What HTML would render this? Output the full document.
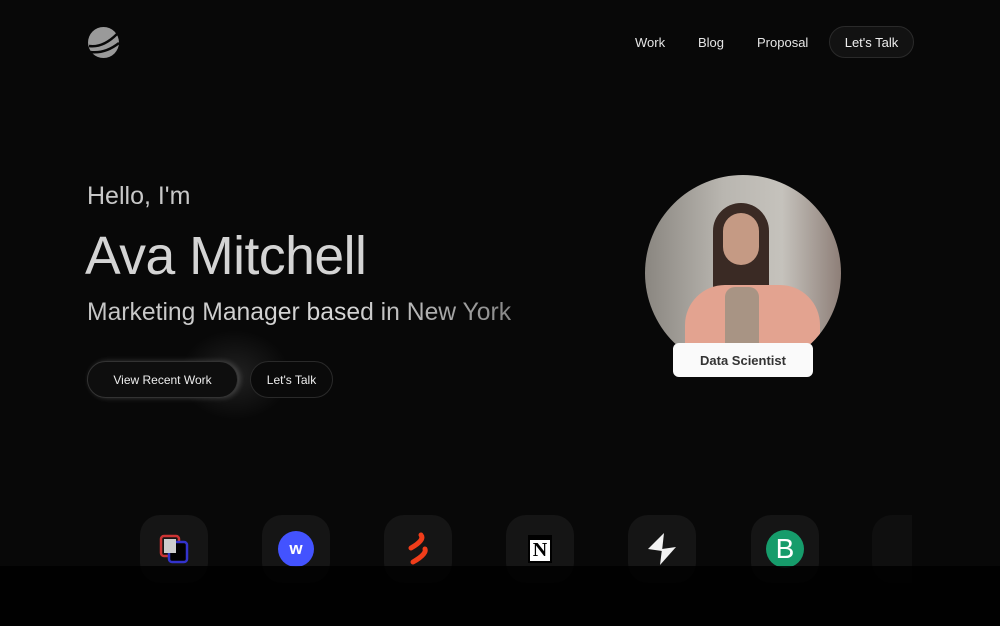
<!DOCTYPE html>
<html><head><meta charset="utf-8"><style>
*{margin:0;padding:0;box-sizing:border-box}
body{width:1000px;height:626px;background:#080808;overflow:hidden;position:relative;font-family:"Liberation Sans",sans-serif;color:#ddd}
.abs{position:absolute}
.nav{top:35px;font-size:13px;color:#e6e6e6}
.pill{border:1px solid #2a2a2a;border-radius:20px;background:#121212;display:flex;align-items:center;justify-content:center;color:#eee}
.tile{position:absolute;top:515px;width:68px;height:68px;border-radius:20px;background:#151515;display:flex;align-items:center;justify-content:center}
</style></head><body>
<svg class="abs" style="left:87px;top:26px" width="33" height="33" viewBox="0 0 33 33">
<circle cx="16.5" cy="16.5" r="15.5" fill="#9a9a9a"/>
<path d="M2 20 Q16 22 30 8" stroke="#080808" stroke-width="2.5" fill="none"/>
<path d="M3 26 Q18 28 32 17" stroke="#080808" stroke-width="2.5" fill="none"/>
</svg>
<div class="abs nav" style="left:635px">Work</div>
<div class="abs nav" style="left:698px">Blog</div>
<div class="abs nav" style="left:757px">Proposal</div>
<div class="abs pill" style="left:829px;top:26px;width:85px;height:32px;font-size:13px">Let's Talk</div>

<div class="abs" style="left:87px;top:182px;font-size:25px;color:#c8c8c8">Hello, I'm</div>
<div class="abs" style="left:85px;top:226px;font-size:53.5px;color:#d4d4d4;letter-spacing:-0.5px">Ava Mitchell</div>
<div class="abs" style="left:87px;top:299px;font-size:24.7px;color:#b8b8b8;background:linear-gradient(90deg,#c4c4c4,#d8d8d8 60%,#888);-webkit-background-clip:text;background-clip:text;-webkit-text-fill-color:transparent">Marketing Manager based in New York</div>

<div class="abs" style="left:180px;top:330px;width:110px;height:90px;border-radius:50%;background:radial-gradient(closest-side,rgba(255,255,255,0.1),rgba(255,255,255,0))"></div>
<div class="abs pill" style="left:87px;top:361px;width:151px;height:37px;font-size:12px;background:#0e0e0e;border-color:#333;box-shadow:2px 0 6px rgba(255,255,255,0.2)">View Recent Work</div>
<div class="abs pill" style="left:250px;top:361px;width:83px;height:37px;font-size:12px;background:#0a0a0a">Let's Talk</div>

<div class="abs" style="left:645px;top:175px;width:196px;height:196px;border-radius:50%;overflow:hidden;background:linear-gradient(90deg,#8a8680,#b9b6b0 40%,#c5c2bc 70%,#8e7f78)">
  <div class="abs" style="left:68px;top:28px;width:56px;height:135px;border-radius:28px 28px 10px 10px;background:#3a2a24"></div>
  <div class="abs" style="left:78px;top:38px;width:36px;height:52px;border-radius:18px;background:#c59a84"></div>
  <div class="abs" style="left:40px;top:110px;width:135px;height:100px;border-radius:40px 40px 0 0;background:#e3a390"></div>
  <div class="abs" style="left:80px;top:112px;width:34px;height:70px;background:#a89484;border-radius:10px"></div>
</div>
<div class="abs" style="left:673px;top:343px;width:140px;height:34px;background:#fafafa;border-radius:6px;color:#333;font-size:13px;font-weight:bold;display:flex;align-items:center;justify-content:center">Data Scientist</div>

<div class="tile" style="left:140px"><svg width="34" height="34" viewBox="0 0 34 34"><rect x="4" y="4" width="18" height="20" rx="3" fill="none" stroke="#c33" stroke-width="2.5"/><rect x="12" y="10" width="18" height="20" rx="3" fill="#000" stroke="#33c" stroke-width="2.5"/><rect x="7" y="7" width="12" height="14" fill="#ccc"/></svg></div>
<div class="tile" style="left:262px"><div style="width:36px;height:36px;border-radius:50%;background:#4353ff;color:#fff;font-weight:bold;font-size:17px;display:flex;align-items:center;justify-content:center">w</div></div>
<div class="tile" style="left:384px"><svg width="30" height="34" viewBox="0 0 30 34"><path d="M18 3 Q22 8 8 16" stroke="#f03d1a" stroke-width="5" fill="none" stroke-linecap="round"/><path d="M22 17 Q24 22 10 30" stroke="#f03d1a" stroke-width="5" fill="none" stroke-linecap="round"/></svg></div>
<div class="tile" style="left:506px"><div style="width:24px;height:28px;background:#fff;border:2px solid #000;border-top-width:5px;color:#000;font-family:'Liberation Serif',serif;font-weight:bold;font-size:20px;display:flex;align-items:center;justify-content:center">N</div></div>
<div class="tile" style="left:628px"><svg width="40" height="40" viewBox="0 0 40 40"><path d="M22 4 L6 20 L20 22 Z" fill="#f2f2f2"/><path d="M20 20 L34 18 L18 36 Z" fill="#f2f2f2"/></svg></div>
<div class="tile" style="left:751px"><div style="width:38px;height:38px;border-radius:50%;background:#169c6b;color:#fff;font-size:28px;display:flex;align-items:center;justify-content:center">B</div></div>
<div class="tile" style="left:872px;width:40px;border-radius:20px 0 0 20px;background:#0f0f0f"></div>
<div class="abs" style="left:0;top:566px;width:1000px;height:60px;background:rgba(0,0,0,0.85)"></div>
</body></html>
